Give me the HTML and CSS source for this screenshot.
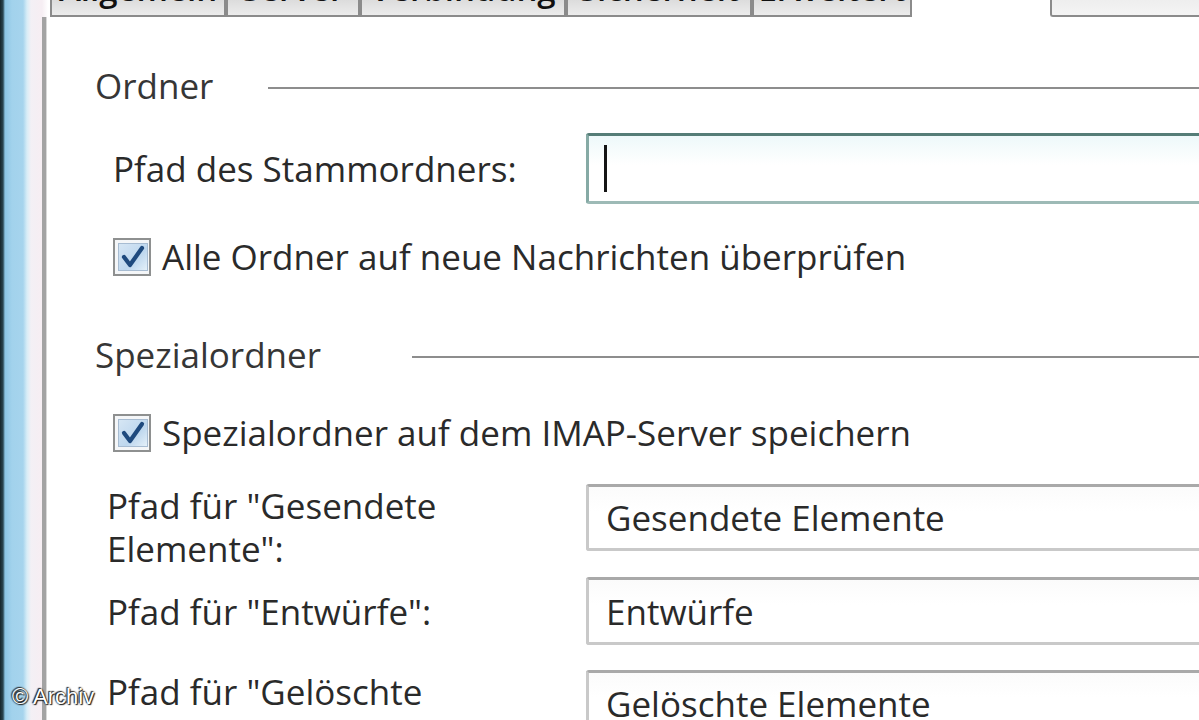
FILE: index.html
```html
<!DOCTYPE html>
<html lang="de">
<head>
<meta charset="utf-8">
<title>Kontoeinstellungen – Erweitert</title>
<link rel="stylesheet" href="styles.css">
</head>
<body>
<div class="screen">
  <div class="edge"></div>
  <div class="dialog">
    <div class="tabbar">
      <div class="tab tab-general"><span class="tab-label">Allgemein</span></div>
      <div class="tab tab-server"><span class="tab-label">Server</span></div>
      <div class="tab tab-conn"><span class="tab-label">Verbindung</span></div>
      <div class="tab tab-sec"><span class="tab-label">Sicherheit</span></div>
      <div class="tab tab-adv"><span class="tab-label">Erweitert</span></div>
      <div class="topbox"></div>
    </div>
    <div class="panel">
      <div class="group-title">
        <span class="title-text title-folders">Ordner</span>
        <span class="rule"></span>
      </div>

      <div class="field-row root-row">
        <label class="field-label root-label">Pfad des Stammordners:</label>
        <div class="input input-focus"><span class="caret"></span></div>
      </div>

      <div class="check-row check-first">
        <span class="checkbox">
          <span class="checkbox-inner">
            <svg viewBox="0 0 28 28" width="28" height="28"><path d="M5 14 L11 22 L23 5" fill="none" stroke="#1f4a7e" stroke-width="4.2" stroke-linecap="round" stroke-linejoin="round"/></svg>
          </span>
        </span>
        <span class="check-text">Alle Ordner auf neue Nachrichten überprüfen</span>
      </div>

      <div class="group-title group-special">
        <span class="title-text title-special">Spezialordner</span>
        <span class="rule"></span>
      </div>

      <div class="check-row check-second">
        <span class="checkbox">
          <span class="checkbox-inner">
            <svg viewBox="0 0 28 28" width="28" height="28"><path d="M5 14 L11 22 L23 5" fill="none" stroke="#1f4a7e" stroke-width="4.2" stroke-linecap="round" stroke-linejoin="round"/></svg>
          </span>
        </span>
        <span class="check-text">Spezialordner auf dem IMAP-Server speichern</span>
      </div>

      <div class="field-row special-row row-sent">
        <label class="field-label special-label">Pfad für "Gesendete Elemente":</label>
        <div class="input"><span class="input-text">Gesendete Elemente</span></div>
      </div>
      <div class="field-row special-row row-drafts">
        <label class="field-label special-label">Pfad für "Entwürfe":</label>
        <div class="input"><span class="input-text">Entwürfe</span></div>
      </div>
      <div class="field-row special-row row-deleted">
        <label class="field-label special-label">Pfad für "Gelöschte Elemente":</label>
        <div class="input"><span class="input-text">Gelöschte Elemente</span></div>
      </div>
    </div>
  </div>
  <div class="watermark">© Archiv</div>
</div>
</body>
</html>
```

FILE: styles.css
```css
html, body {
  margin: 0;
  padding: 0;
  background: #ffffff;
  overflow: hidden;
}

.screen {
  position: relative;
  width: 1199px;
  height: 720px;
  overflow: hidden;
  display: flex;
  font-family: "Open Sans", "Noto Sans", "DejaVu Sans", sans-serif;
  font-size: 35px;
  color: #2a2a2a;
}

.edge {
  flex: 0 0 42px;
  background: linear-gradient(to right,
    #16262a 0px, #2a4650 3px, #8cc6e4 5px, #a2d2ec 12px, #a6d4ed 23px,
    #d8edf7 27px, #f3f0f5 31px, #f6eef3 40px, #f6eef3 42px);
}

.dialog {
  flex: 0 0 1260px;
  display: flex;
  flex-direction: column;
}

/* ---------- tab strip ---------- */
.tabbar {
  height: 17px;
  display: flex;
  align-items: stretch;
  padding-left: 8px;
  background: linear-gradient(to right, #f6eef3 0px, #ffffff 6px);
}

.tab {
  box-sizing: border-box;
  height: 17px;
  border: 2px solid #8b8b8b;
  border-top: none;
  background: linear-gradient(to bottom, #dcdcdc, #ececec);
  overflow: hidden;
  display: flex;
  justify-content: center;
}

.tab-label {
  display: block;
  font-size: 33px;
  line-height: 33px;
  margin-top: -28px;
  color: #111;
  font-weight: 600;
  white-space: nowrap;
}

.tab-general { width: 176px; }
.tab-server  { width: 134px; }
.tab-conn    { width: 206px; }
.tab-sec     { width: 186px; }
.tab-adv     { width: 160px; }

.topbox {
  box-sizing: border-box;
  margin-left: 138px;
  flex: 1;
  border-left: 2px solid #8b8b8b;
  border-bottom: 2px solid #8b8b8b;
  border-bottom-left-radius: 3px;
  background: linear-gradient(to bottom, #eeeeee, #f4f4f4);
}

/* ---------- panel ---------- */
.panel {
  flex: 1;
  border-left: 4px solid #a3a3a3;
  box-shadow: inset 1px 0 0 #d8d8d8;
  padding-top: 49px;
  padding-left: 49px;
  display: flex;
  flex-direction: column;
}

.group-title {
  display: flex;
  align-items: center;
  height: 40px;
  line-height: 40px;
}

.title-text {
  color: #363636;
  white-space: nowrap;
}

.title-folders { width: 173px; }
.title-special { width: 317px; }

.rule {
  flex: 1;
  height: 2px;
  background: #8d8d8d;
  margin-top: 4px;
}

.group-special {
  margin-top: 59px;
}

/* ---------- fields ---------- */
.field-row {
  display: flex;
}

.root-row {
  margin-top: 27px;
  margin-left: 18px;
  align-items: center;
}

.root-label {
  width: 473px;
}

.field-label {
  flex: 0 0 auto;
  line-height: 43px;
  color: #2a2a2a;
}

.input {
  flex: 1;
  box-sizing: border-box;
  height: 67px;
  border: 3px solid #c9c9c9;
  border-top-color: #a9a9a9;
  border-radius: 3px;
  background: linear-gradient(to bottom, #fbfbfb, #ffffff 40%);
  display: flex;
  align-items: center;
  padding-left: 17px;
}

.input-focus {
  height: 71px;
  border-color: #86aaa5;
  border-top-color: #557d77;
  border-bottom-color: #9dbab6;
  background: linear-gradient(to bottom, #eef9fa, #ffffff 45%);
  padding-left: 15px;
}

.caret {
  width: 3px;
  height: 47px;
  background: #151515;
}

.input-text {
  color: #2a2a2a;
  line-height: 43px;
  white-space: nowrap;
}

/* ---------- checkboxes ---------- */
.check-row {
  display: flex;
  align-items: center;
  height: 38px;
  margin-left: 18px;
}

.check-first  { margin-top: 34px; }
.check-second { margin-top: 39px; }

.checkbox {
  box-sizing: border-box;
  width: 38px;
  height: 38px;
  border: 2px solid #8e9090;
  background: #f4f6f8;
  padding: 3px;
  display: flex;
}

.checkbox-inner {
  flex: 1;
  box-sizing: border-box;
  border: 1px solid #a7bcd2;
  background: linear-gradient(135deg, #d6e6f4, #bed7ee 60%, #e4f0f9);
  display: flex;
  align-items: center;
  justify-content: center;
}

.check-text {
  margin-left: 11px;
  line-height: 40px;
  white-space: nowrap;
}

/* ---------- special folder rows ---------- */
.special-row {
  margin-left: 12px;
}

.special-label {
  width: 479px;
}

.row-sent {
  margin-top: 32px;
  align-items: flex-start;
}
.row-sent .special-label { width: 360px; margin-right: 119px; }

.row-drafts {
  margin-top: 7px;
  align-items: center;
}
.row-drafts .input { height: 68px; }

.row-deleted {
  margin-top: 25px;
  align-items: flex-start;
}
.row-deleted .special-label { width: 360px; margin-right: 119px; }

/* ---------- watermark ---------- */
.watermark {
  position: absolute;
  left: 12px;
  top: 682px;
  font-family: "Liberation Sans", Arial, sans-serif;
  font-size: 22px;
  line-height: 30px;
  color: #ffffff;
  text-shadow: 0 0 2px #000, 1px 1px 1px #222, -1px -1px 1px #333;
  white-space: nowrap;
}
```
